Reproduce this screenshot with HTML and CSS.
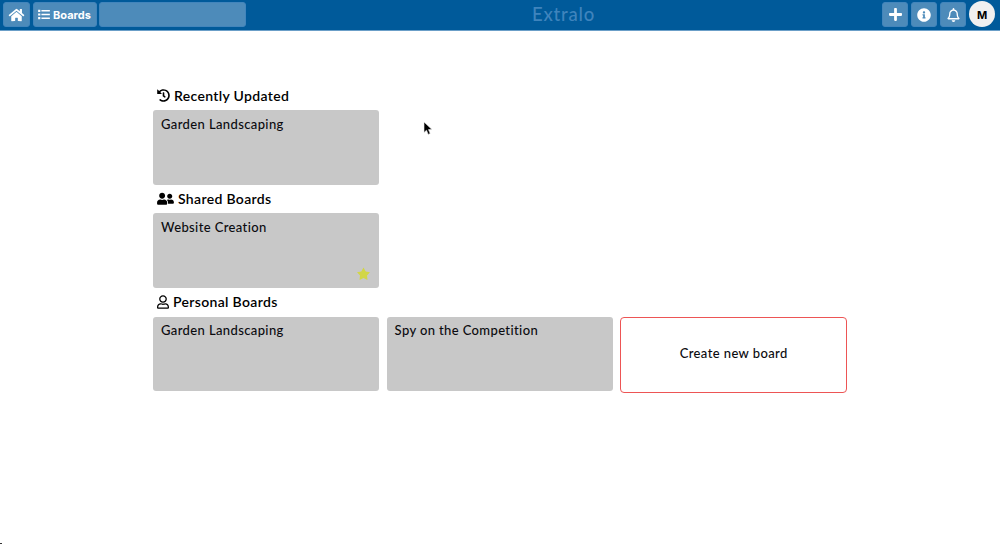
FILE: index.html
```html
<!DOCTYPE html>
<html lang="en">
<head>
<meta charset="utf-8">
<title>Extralo</title>
<link rel="stylesheet" href="styles.css">
</head>
<body>
<header class="topbar">
  <nav class="group">
    <a class="btn home"><svg width="17" height="14" viewBox="0 0 576 512"><path d="M280.37 148.26L96 300.11V464a16 16 0 0 0 16 16l112.06-.29a16 16 0 0 0 15.92-16V368a16 16 0 0 1 16-16h64a16 16 0 0 1 16 16v95.64a16 16 0 0 0 16 16.05L464 480a16 16 0 0 0 16-16V300L295.67 148.26a12.19 12.19 0 0 0-15.3 0zM571.6 251.47L488 182.56V44.05a12 12 0 0 0-12-12h-56a12 12 0 0 0-12 12v72.61L318.47 43a48 48 0 0 0-61 0L4.34 251.47a12 12 0 0 0-1.6 16.9l25.5 31A12 12 0 0 0 45.15 301l235.22-193.74a12.19 12.19 0 0 1 15.3 0L530.9 301a12 12 0 0 0 16.9-1.6l25.5-31a12 12 0 0 0-1.7-16.93z"/></svg></a>
    <a class="btn boards"><svg width="12" height="11" viewBox="0 0 512 480"><path d="M0 32h96v96H0zM0 192h96v96H0zM0 352h96v96H0zM144 48h368v64H144zM144 208h368v64H144zM144 368h368v64H144z"/></svg><span>Boards</span></a>
    <div class="btn search"></div>
  </nav>
  <div class="brand">Extralo</div>
  <nav class="group">
    <a class="btn action"><svg width="13" height="15" viewBox="0 0 448 512"><path d="M416 208H272V64c0-17.67-14.33-32-32-32h-32c-17.67 0-32 14.33-32 32v144H32c-17.67 0-32 14.33-32 32v32c0 17.67 14.33 32 32 32h144v144c0 17.67 14.33 32 32 32h32c17.67 0 32-14.33 32-32V304h144c17.67 0 32-14.33 32-32v-32c0-17.67-14.33-32-32-32z"/></svg></a>
    <a class="btn action"><svg width="14" height="14" viewBox="0 0 512 512"><path d="M256 8C119.043 8 8 119.083 8 256c0 136.997 111.043 248 248 248s248-111.003 248-248C504 119.083 392.957 8 256 8zm0 110c23.196 0 42 18.804 42 42s-18.804 42-42 42-42-18.804-42-42 18.804-42 42-42zm56 254c0 6.627-5.373 12-12 12h-88c-6.627 0-12-5.373-12-12v-24c0-6.627 5.373-12 12-12h12v-64h-12c-6.627 0-12-5.373-12-12v-24c0-6.627 5.373-12 12-12h64c6.627 0 12 5.373 12 12v100h12c6.627 0 12 5.373 12 12v24z"/></svg></a>
    <a class="btn action"><svg width="13" height="14" viewBox="0 0 448 512"><path d="M439.39 362.29c-19.32-20.76-55.47-51.99-55.47-154.29 0-77.7-54.48-139.9-127.94-155.16V32c0-17.67-14.32-32-31.98-32s-31.98 14.33-31.98 32v20.84C118.56 68.1 64.08 130.3 64.08 208c0 102.3-36.15 133.53-55.47 154.29-6 6.45-8.66 14.16-8.61 21.71.11 16.4 12.98 32 32.1 32h383.8c19.12 0 32-15.6 32.1-32 .05-7.55-2.61-15.27-8.61-21.71zM67.53 368c21.22-27.97 44.42-74.33 44.53-159.42 0-.2-.06-.38-.06-.58 0-61.86 50.14-112 112-112s112 50.14 112 112c0 .2-.06.38-.06.58.11 85.1 23.31 131.46 44.53 159.42H67.53zM224 512c35.32 0 63.97-28.65 63.97-64H160.03c0 35.35 28.65 64 63.97 64z"/></svg></a>
    <a class="avatar">M</a>
  </nav>
</header>
<main class="content">
  <section>
    <h2 class="title"><svg width="13" height="13" viewBox="0 0 512 512"><path d="M504 255.531c.253 136.64-111.18 248.372-247.82 248.468-59.015.042-113.223-20.53-155.822-54.911-11.077-8.94-11.905-25.541-1.839-35.607l11.267-11.267c8.609-8.609 22.353-9.551 31.891-1.984C173.062 425.135 212.781 440 256 440c101.705 0 184-82.311 184-184 0-101.705-82.311-184-184-184-48.814 0-93.149 18.969-126.068 49.932l50.754 50.754c10.08 10.08 2.941 27.314-11.313 27.314H24c-8.837 0-16-7.163-16-16V38.627c0-14.254 17.234-21.393 27.314-11.314l49.372 49.372C129.209 34.136 189.552 8 256 8c136.81 0 247.747 110.78 248 247.531zm-180.912 78.784l9.823-12.63c8.138-10.463 6.253-25.542-4.21-33.679L288 256.349V152c0-13.255-10.745-24-24-24h-16c-13.255 0-24 10.745-24 24v135.651l65.409 50.874c10.463 8.137 25.541 6.253 33.679-4.21z"/></svg>Recently Updated</h2>
    <div class="row"><article class="card">Garden Landscaping</article></div>
  </section>
  <section>
    <h2 class="title"><svg width="17" height="13.5" viewBox="0 0 640 512"><path d="M192 256c61.900 0 112-50.100 112-112S253.900 32 192 32 80 82.100 80 144s50.100 112 112 112zm76.800 32h-8.300c-20.800 10-43.900 16-68.500 16s-47.600-6-68.500-16h-8.300C51.600 288 0 339.600 0 403.200V432c0 26.500 21.500 48 48 48h288c26.500 0 48-21.500 48-48v-28.800c0-63.600-51.600-115.200-115.200-115.200zM480 256c53 0 96-43 96-96s-43-96-96-96-96 43-96 96 43 96 96 96zm48 32h-3.800c-13.900 4.800-28.600 8-44.200 8s-30.300-3.200-44.200-8H432c-20.400 0-39.200 5.900-55.700 15.400 24.400 26.300 39.700 61.200 39.700 99.800v38.400c0 2.200-.5 4.300-.6 6.400H592c26.500 0 48-21.500 48-48 0-61.900-50.100-112-112-112z"/></svg>Shared Boards</h2>
    <div class="row"><article class="card starred">Website Creation<svg class="star" width="15" height="14" viewBox="0 0 15 14"><path d="M7.500.5l2.200 4 4.300.8-3 3.200.5 4.500-4-1.900-4 1.900.5-4.500-3-3.200 4.300-.8z"/></svg></article></div>
  </section>
  <section>
    <h2 class="title"><svg width="12" height="14" viewBox="0 0 448 512"><path d="M313.600 304c-28.700 0-42.500 16-89.600 16-47.100 0-60.800-16-89.600-16C60.200 304 0 364.200 0 438.400V464c0 26.500 21.500 48 48 48h352c26.500 0 48-21.500 48-48v-25.600c0-74.200-60.200-134.400-134.400-134.400zM400 464H48v-25.600c0-47.600 38.800-86.400 86.400-86.400 14.600 0 38.300 16 89.600 16 51.700 0 74.900-16 89.600-16 47.600 0 86.400 38.800 86.400 86.400V464zM224 288c79.500 0 144-64.500 144-144S303.500 0 224 0 80 64.500 80 144s64.500 144 144 144zm0-240c52.900 0 96 43.100 96 96s-43.100 96-96 96-96-43.100-96-96 43.100-96 96-96z"/></svg>Personal Boards</h2>
    <div class="row">
      <article class="card">Garden Landscaping</article>
      <article class="card">Spy on the Competition</article>
      <button class="create">Create new board</button>
    </div>
  </section>
</main>
<svg class="cursor" width="10" height="15" viewBox="0 0 10 15"><path d="M1 1v10.500l2.500-2.300 1.700 4.200 2-.9-1.700-3.900H9z"/></svg>
<div class="corner"></div>
</body>
</html>
```
FILE: styles.css
```css
* { box-sizing: border-box; }
body {
  margin: 0;
  height: 544px;
  overflow: hidden;
  background: #fff;
  color: #0b0b0f;
  font-family: Lato, sans-serif;
}
svg { display: block; flex: none; fill: currentColor; }
.topbar {
  display: flex;
  justify-content: space-between;
  height: 31px;
  padding: 0 5px 0 3px;
  background: #005a9a;
  border-bottom: 1px solid #6b9fc8;
}
.group { display: flex; gap: 3px; padding-top: 2px; }
.btn {
  display: flex;
  align-items: center;
  justify-content: center;
  height: 25px;
  border-radius: 3px;
  background: #4d8bba;
  border: 1px solid #4285bc;
  color: #fff;
}
.home { width: 27px; }
.boards {
  width: 64px;
  padding-right: 1px;
  gap: 3px;
  font: 700 11px Inter, sans-serif;
}
.search { width: 147px; margin-left: -1px; }
.brand {
  padding: 2px 1px 0 0;
  color: #3f84bd;
  font-size: 18.5px;
  font-weight: 500;
  line-height: 24px;
  letter-spacing: .8px;
}
.action { width: 26px; }
.avatar {
  width: 26px;
  height: 26px;
  margin-top: -1px;
  border-radius: 50%;
  background: #f0f0f0;
  color: #000;
  font: 700 11px/28px Inter, sans-serif;
  text-align: center;
}
.content { width: 694px; margin: 51px 0 0 153px; }
.title {
  display: flex;
  align-items: center;
  gap: 4px;
  height: 28.2px;
  margin: 0;
  padding: 0 0 1px 4px;
  color: #000;
  font-size: 14px;
  font-weight: 600;
  letter-spacing: .33px;
}
.row {
  display: grid;
  grid-template-columns: 226px 226px 227px;
  gap: 7.6px;
  align-items: start;
  height: 75px;
}
.card {
  height: 74.400px;
  padding: 4.800px 8px;
  border-radius: 3px;
  background: #c8c8c8;
  font-size: 13px;
  line-height: 18px;
  letter-spacing: .38px;
  font-weight: 500;
}
.starred { position: relative; }
.star { position: absolute; right: 8px; bottom: 7px; color: #d2d647; }
.create {
  height: 76px;
  padding: 0 0 3px;
  border: 1px solid #ed5555;
  border-radius: 4px;
  background: #fff;
  color: #0b0b0f;
  font: 500 13px Lato, sans-serif;
  letter-spacing: .4px;
}
.cursor {
  position: absolute;
  left: 423px;
  top: 121px;
  fill: #000;
  stroke: #eee;
  stroke-width: .6px;
}
.corner { position: absolute; left: 0; bottom: 0; width: 2px; height: 1px; background: #333; }
```
